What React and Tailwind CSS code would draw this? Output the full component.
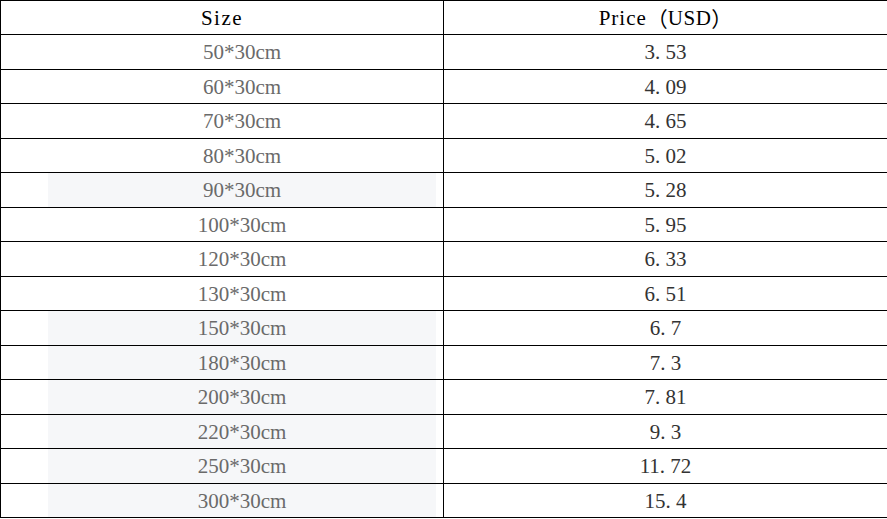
import React from "react";

const rows = [
  ["50*30cm", "3.53", false],
  ["60*30cm", "4.09", false],
  ["70*30cm", "4.65", false],
  ["80*30cm", "5.02", false],
  ["90*30cm", "5.28", true],
  ["100*30cm", "5.95", false],
  ["120*30cm", "6.33", false],
  ["130*30cm", "6.51", false],
  ["150*30cm", "6.7", true],
  ["180*30cm", "7.3", true],
  ["200*30cm", "7.81", true],
  ["220*30cm", "9.3", true],
  ["250*30cm", "11.72", true],
  ["300*30cm", "15.4", true],
];

const font = { fontFamily: '"Liberation Serif", "Noto Sans CJK SC", serif' };
const cjk = { fontFamily: '"Noto Sans CJK SC", sans-serif' };

function Price({ value }) {
  const [a, b] = value.split(".");
  return (
    <span>
      {a}
      <span className="inline-block w-[0.5em] text-left">.</span>
      {b}
    </span>
  );
}

export default function App() {
  return (
    <div className="w-[887px] h-[519px] bg-white overflow-hidden" style={font}>
      <div className="border-t border-l border-black flex flex-col">
        <div className="flex h-[34px] border-b border-black">
          <div className="w-[443px] border-r border-black flex items-center justify-center pt-[2px] text-[21px] text-black">
            <span className="tracking-[1.5px]">Size</span>
          </div>
          <div className="flex-1 flex items-center justify-center pt-[2px] text-[21px] text-black">
            <span className="tracking-[1px]">Price</span>
            <span style={cjk}>（</span>
            <span className="tracking-[0.5px]">USD</span>
            <span style={cjk}>）</span>
          </div>
        </div>
        {rows.map(([size, price, gray], i) => (
          <div
            key={size}
            className={`flex border-b border-black ${i % 2 === 0 ? "h-[35px]" : "h-[34px]"}`}
          >
            <div className="w-[443px] border-r border-black flex pl-[47px] pr-[7px]">
              <div
                className={`flex-1 flex items-center justify-center pt-[2px] text-[21px] text-[#6a6a6a] ${gray ? "bg-[#f6f7f9]" : ""}`}
              >
                {size}
              </div>
            </div>
            <div className="flex-1 flex items-center justify-center pt-[2px] text-[21px] text-[#333333]">
              <Price value={price} />
            </div>
          </div>
        ))}
      </div>
    </div>
  );
}
